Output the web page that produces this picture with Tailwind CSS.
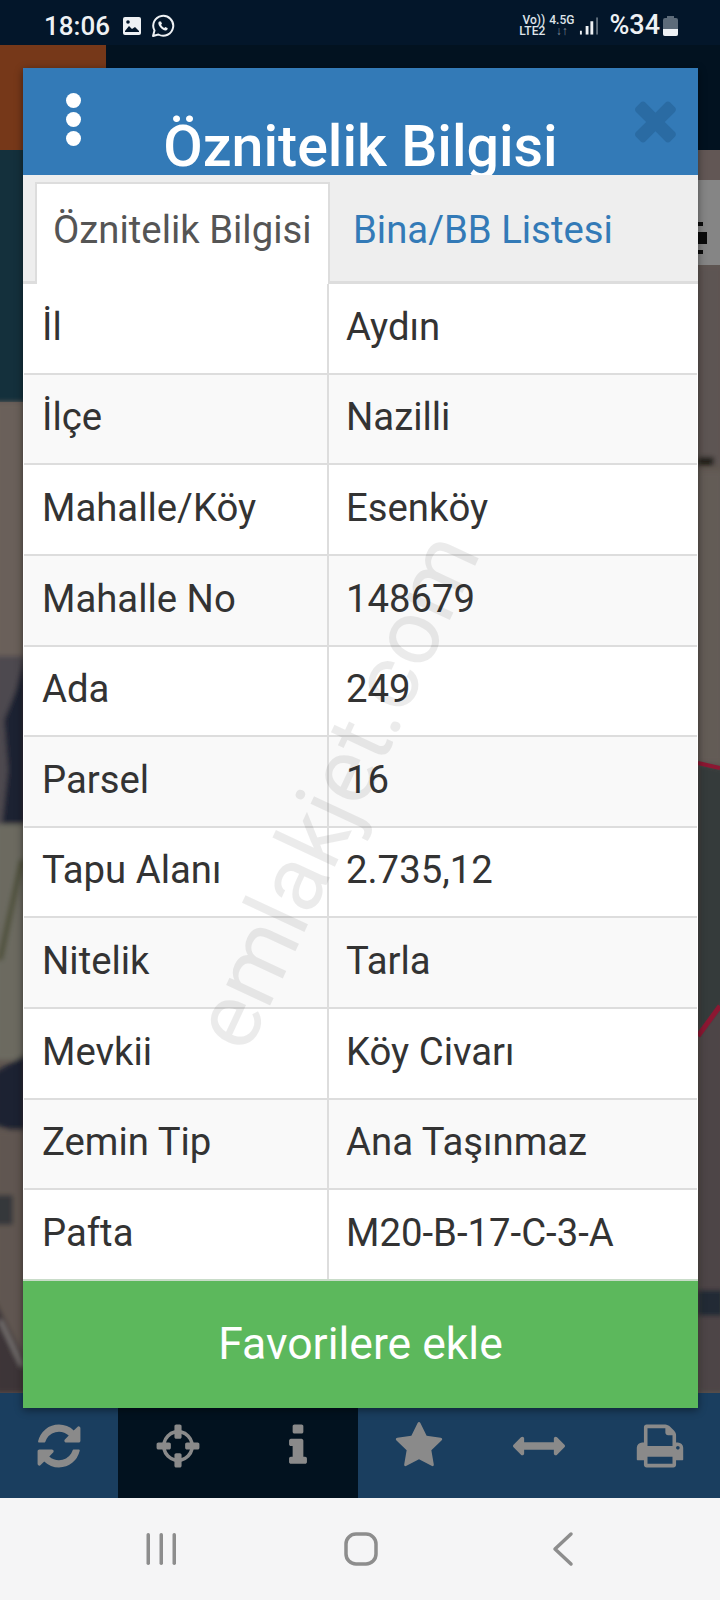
<!DOCTYPE html>
<html lang="tr">
<head>
    <meta charset="UTF-8">
    <meta name="viewport" content="width=device-width, initial-scale=1.0">
    <title>Öznitelik Bilgisi</title>
    <script src="https://cdn.jsdelivr.net/npm/@tailwindcss/browser@4"></script>
</head>
<body class="bg-[#f5f5f6]">
<div class="relative w-[720px] h-[1600px] overflow-hidden flex flex-col font-['Roboto',sans-serif]">

    <!-- status bar -->
    <div class="h-[45px] bg-[#03162a] flex items-center pl-[44px] pr-[42px] pt-[6px] text-white shrink-0">
        <span class="text-[26px] font-medium leading-none text-[#eef1f4] w-[66px]">18:06</span>
        <svg class="ml-[12px] mt-[1px]" width="20" height="20" viewBox="0 0 20 20"><rect x="1" y="1" width="18" height="18" rx="2" fill="#eef1f4"/><path d="M3 15l4-5 3 3 3-2 4 4v1H3z" fill="#03162a"/><circle cx="6" cy="6" r="1.8" fill="#03162a"/></svg>
        <svg class="ml-[9px] mt-[1px]" width="24" height="24" viewBox="0 0 24 24"><path d="M2 22l1.500-5.400A10 10 0 1 1 7.400 20.500z" fill="none" stroke="#eef1f4" stroke-width="2" stroke-linejoin="round"/><path d="M8 7.500c-1 1-1 3 1 5.500s4.500 4 6 3.500 2-2 1.500-2.500l-2.200-1.100-1 1.100c-1-.3-2.700-2-3.200-3.200l.9-1-1-2.300z" fill="#eef1f4"/></svg>
        <div class="ml-auto flex items-center">
            <div class="flex flex-col items-end text-[12px] font-medium leading-[11px] text-[#dfe4e9]"><span>Vo))</span><span>LTE2</span></div>
            <div class="ml-[4px] flex flex-col items-center text-[12px] font-medium leading-[11px] text-[#dfe4e9]"><span>4.5G</span><span class="text-[#7d8b99]">↓↑</span></div>
            <svg class="ml-[5px]" width="19" height="20" viewBox="0 0 20 20"><rect x="1" y="15" width="2" height="4" fill="#eef1f4"/><rect x="7" y="10" width="3" height="9" fill="#eef1f4"/><rect x="12" y="5" width="3" height="14" fill="#eef1f4"/><rect x="18" y="1" width="2" height="18" fill="#5f6d7b"/></svg>
            <span class="ml-[11px] text-[27px] font-medium leading-none text-[#eef1f4]">%34</span>
            <svg class="ml-[3px]" width="15" height="21" viewBox="0 0 15 21"><path d="M4 1h7v2h2q2 0 2 2v14q0 2-2 2H2q-2 0-2-2V5q0-2 2-2h2z" fill="#5d6b79"/><path d="M0 14h15v5q0 2-2 2H2q-2 0-2-2z" fill="#eef1f4"/></svg>
        </div>
    </div>

    <!-- map behind the dialog -->
    <div class="relative flex-1 bg-[#5f5650]">
        <svg class="absolute inset-0" width="720" height="1348" viewBox="0 45 720 1348" preserveAspectRatio="none">
            <defs><filter id="soft" x="-20%" y="-5%" width="140%" height="110%"><feGaussianBlur stdDeviation="2.500"/></filter></defs>
            <rect x="0" y="45" width="720" height="105" fill="#021220"/>
            <rect x="0" y="45" width="106" height="105" fill="#763819"/>
            <rect x="0" y="150" width="23" height="252" fill="#14303c"/>
            <g filter="url(#soft)">
                <rect x="-5" y="402" width="30" height="260" fill="#6a605a"/>
                <rect x="-5" y="656" width="30" height="170" fill="#4e4a50"/>
                <path d="M25 656V824H2L8 770 4 720 16 690z" fill="#1d2133"/>
                <rect x="-5" y="824" width="30" height="236" fill="#6c6a60"/>
                <path d="M0 960L22 860" stroke="#4c4d36" stroke-width="5"/>
                <path d="M-5 1072L25 1055V1135L-5 1125z" fill="#1b2233"/>
                <rect x="-5" y="1130" width="30" height="215" fill="#605751"/>
                <rect x="-5" y="1195" width="18" height="30" fill="#35383a"/>
                <path d="M-5 1300L25 1360V1393H-5z" fill="#3c3638"/>
                <path d="M0 1320L22 1366" stroke="#85817f" stroke-width="3"/>
                <rect x="698" y="265" width="25" height="200" fill="#5d5553"/>
                <rect x="698" y="457" width="16" height="8" fill="#1e1a18"/>
                <rect x="698" y="471" width="25" height="292" fill="#635b57"/>
                <path d="M698 763L725 769V1000L698 1036z" fill="#343b3b"/>
                <path d="M698 1036L725 1000V1393H698z" fill="#4d4546"/>
                <rect x="698" y="1290" width="25" height="26" fill="#232a35"/>
            </g>
            <rect x="698" y="150" width="22" height="30" fill="#625755"/>
            <rect x="698" y="180" width="22" height="85" fill="#858585"/>
            <rect x="698" y="232" width="9" height="12" fill="#0b0b0b"/>
            <rect x="698" y="222" width="5" height="4" fill="#0b0b0b"/>
            <rect x="698" y="250" width="5" height="4" fill="#0b0b0b"/>
            <path d="M698 763L720 768" stroke="#8c1732" stroke-width="4"/>
            <path d="M698 1036L720 1006" stroke="#8c1732" stroke-width="5"/>
        </svg>
    </div>

    <!-- bottom toolbar -->
    <div class="h-[105px] bg-[#1a3e5f] grid grid-cols-[118px_120px_120px_121px_120px_121px] shrink-0 text-[#8a8a8a]">
        <div class="flex items-center justify-center">
            <svg width="50" height="50" viewBox="0 0 1792 1792" fill="currentColor"><path d="M1639 1056q0 5-1 7-64 268-268 434.500t-478 166.500q-146 0-282.500-55t-243.500-157l-129 129q-19 19-45 19t-45-19-19-45v-448q0-26 19-45t45-19h448q26 0 45 19t19 45-19 45l-137 137q71 66 161 102t187 36q134 0 250-65t186-179q11-17 53-117 8-23 30-23h192q13 0 22.500 9.500t9.500 22.500zm25-800v448q0 26-19 45t-45 19h-448q-26 0-45-19t-19-45 19-45l138-138q-148-137-349-137-134 0-250 65t-186 179q-11 17-53 117-8 23-30 23h-199q-13 0-22.500-9.500t-9.500-22.500v-7q65-268 270-434.500t480-166.500q146 0 284 55.500t245 156.500l130-129q19-19 45-19t45 19 19 45z"/></svg>
        </div>
        <div class="flex items-center justify-center bg-[#02121f]">
            <svg width="50" height="50" viewBox="0 0 1792 1792" fill="currentColor"><path d="M1325 1024h-109q-26 0-45-19t-19-45v-128q0-26 19-45t45-19h109q-32-108-112.500-188.500t-188.500-112.500v109q0 26-19 45t-45 19h-128q-26 0-45-19t-19-45v-109q-108 32-188.500 112.500t-112.500 188.500h109q26 0 45 19t19 45v128q0 26-19 45t-45 19h-109q32 108 112.500 188.500t188.500 112.500v-109q0-26 19-45t45-19h128q26 0 45 19t19 45v109q108-32 188.500-112.500t112.500-188.500zm339-192v128q0 26-19 45t-45 19h-143q-37 161-154.500 278.500t-278.500 154.500v143q0 26-19 45t-45 19h-128q-26 0-45-19t-19-45v-143q-161-37-278.500-154.500t-154.500-278.500h-143q-26 0-45-19t-19-45v-128q0-26 19-45t45-19h143q37-161 154.500-278.500t278.500-154.500v-143q0-26 19-45t45-19h128q26 0 45 19t19 45v143q161 37 278.500 154.500t154.500 278.500h143q26 0 45 19t19 45z"/></svg>
        </div>
        <div class="flex items-center justify-center bg-[#02121f]">
            <svg width="50" height="50" viewBox="0 0 1792 1792" fill="currentColor"><path d="M1216 1344v128q0 26-19 45t-45 19h-512q-26 0-45-19t-19-45v-128q0-26 19-45t45-19h64v-384h-64q-26 0-45-19t-19-45v-128q0-26 19-45t45-19h384q26 0 45 19t19 45v576h64q26 0 45 19t19 45zm-128-1152v192q0 26-19 45t-45 19h-256q-26 0-45-19t-19-45v-192q0-26 19-45t45-19h256q26 0 45 19t19 45z"/></svg>
        </div>
        <div class="flex items-center justify-center">
            <svg width="50" height="50" viewBox="0 0 1792 1792" fill="currentColor"><path d="M1728 647q0 22-26 48l-363 354 86 500q1 7 1 20 0 21-10.500 35.500t-30.500 14.500q-19 0-40-12l-449-236-449 236q-22 12-40 12-21 0-31.500-14.500t-10.500-35.500q0-6 2-20l86-500-364-354q-25-27-25-48 0-37 56-46l502-73 225-455q19-41 49-41t49 41l225 455 502 73q56 9 56 46z"/></svg>
        </div>
        <div class="flex items-center justify-center">
            <svg width="52" height="52" viewBox="0 0 1792 1792" fill="currentColor"><path d="M1792 896q0 26-19 45l-256 256q-19 19-45 19t-45-19-19-45v-128h-1024v128q0 26-19 45t-45 19-45-19l-256-256q-19-19-19-45t19-45l256-256q19-19 45-19t45 19 19 45v128h1024v-128q0-26 19-45t45-19 45 19l256 256q19 19 19 45z"/></svg>
        </div>
        <div class="flex items-center justify-center">
            <svg width="50" height="50" viewBox="0 0 1792 1792" fill="currentColor"><path d="M448 1536h896v-256h-896v256zm0-640h896v-384h-160q-40 0-68-28t-28-68v-160h-640v640zm1152 64q0-26-19-45t-45-19-45 19-19 45 19 45 45 19 45-19 19-45zm128 0v416q0 13-9.500 22.500t-22.500 9.500h-224v160q0 40-28 68t-68 28h-960q-40 0-68-28t-28-68v-160h-224q-13 0-22.500-9.500t-9.500-22.500v-416q0-79 56.500-135.500t135.500-56.500h64v-544q0-40 28-68t68-28h672q40 0 88 20t76 48l152 152q28 28 48 76t20 88v256h64q79 0 135.500 56.500t56.500 135.500z"/></svg>
        </div>
    </div>

    <!-- android nav bar -->
    <div class="h-[102px] bg-[#f5f5f6] grid grid-cols-3 shrink-0 text-[#8d8d8d]">
        <div class="flex items-center justify-center">
            <svg class="ml-[82px]" width="36" height="36" viewBox="0 0 36 36" fill="currentColor"><rect x="3.500" y="2" width="3.500" height="32" rx="1.700"/><rect x="16.500" y="2" width="3.500" height="32" rx="1.700"/><rect x="29.500" y="2" width="3.500" height="32" rx="1.700"/></svg>
        </div>
        <div class="flex items-center justify-center">
            <svg class="ml-[2px]" width="36" height="36" viewBox="0 0 36 36" fill="none" stroke="currentColor" stroke-width="3.500"><rect x="3" y="3" width="30" height="30" rx="10"/></svg>
        </div>
        <div class="flex items-center justify-center">
            <svg class="ml-[-74px]" width="24" height="36" viewBox="0 0 24 36" fill="none" stroke="currentColor" stroke-width="3.500" stroke-linecap="round" stroke-linejoin="round"><path d="M20 3L4 18l16 15"/></svg>
        </div>
    </div>

    <!-- dialog -->
    <div class="absolute left-[23px] top-[68px] w-[675px] h-[1340px] flex flex-col bg-white shadow-[0_2px_8px_rgba(0,0,0,0.45)]">
        <div class="relative h-[107px] bg-[#337ab7] overflow-hidden shrink-0">
            <div class="absolute left-[43px] top-[25px] flex flex-col gap-[4px]">
                <span class="w-[15px] h-[15px] rounded-full bg-white"></span>
                <span class="w-[15px] h-[15px] rounded-full bg-white"></span>
                <span class="w-[15px] h-[15px] rounded-full bg-white"></span>
            </div>
            <div class="absolute left-0 right-0 top-[46px] text-center text-white text-[57.300px] font-medium leading-[66px] whitespace-nowrap">Öznitelik Bilgisi</div>
            <svg class="absolute left-[611px] top-[32px]" width="44" height="44" viewBox="272 320 1280 1280" fill="#2a6ba3"><path d="M1490 1322q0 40-28 68l-136 136q-28 28-68 28t-68-28l-294-294-294 294q-28 28-68 28t-68-28l-136-136q-28-28-28-68t28-68l294-294-294-294q-28-28-28-68t28-68l136-136q28-28 68-28t68 28l294 294 294-294q28-28 68-28t68 28l136 136q28 28 28 68t-28 68l-294 294 294 294q28 28 28 68z"/></svg>
        </div>

        <div class="h-[109px] bg-[#eeeeee] border-b-[3px] border-[#dddddd] flex pl-[12px] pt-[7px] shrink-0">
            <div class="w-[295px] h-[103px] bg-white border-2 border-b-0 border-[#dddddd] pl-[16px] pt-[24px] text-[38.300px] leading-[44px] text-[#555555] whitespace-nowrap">Öznitelik Bilgisi</div>
            <div class="pl-[23px] pt-[26px] text-[38.300px] leading-[44px] text-[#337ab7] whitespace-nowrap">Bina/BB Listesi</div>
        </div>

        <div class="flex-1 flex flex-col px-[1px] text-[38.300px] text-[#333333]">
            <div class="grid grid-cols-[305px_1fr] flex-1 border-b-2 border-[#dddddd] bg-white"><div class="flex items-center pl-[18px] pb-[4px] border-r-2 border-[#dddddd]">İl</div><div class="flex items-center pl-[17px] pb-[4px]">Aydın</div></div>
            <div class="grid grid-cols-[305px_1fr] flex-1 border-b-2 border-[#dddddd] bg-[#f9f9f9]"><div class="flex items-center pl-[18px] pb-[4px] border-r-2 border-[#dddddd]">İlçe</div><div class="flex items-center pl-[17px] pb-[4px]">Nazilli</div></div>
            <div class="grid grid-cols-[305px_1fr] flex-1 border-b-2 border-[#dddddd] bg-white"><div class="flex items-center pl-[18px] pb-[4px] border-r-2 border-[#dddddd]">Mahalle/Köy</div><div class="flex items-center pl-[17px] pb-[4px]">Esenköy</div></div>
            <div class="grid grid-cols-[305px_1fr] flex-1 border-b-2 border-[#dddddd] bg-[#f9f9f9]"><div class="flex items-center pl-[18px] pb-[4px] border-r-2 border-[#dddddd]">Mahalle No</div><div class="flex items-center pl-[17px] pb-[4px]">148679</div></div>
            <div class="grid grid-cols-[305px_1fr] flex-1 border-b-2 border-[#dddddd] bg-white"><div class="flex items-center pl-[18px] pb-[4px] border-r-2 border-[#dddddd]">Ada</div><div class="flex items-center pl-[17px] pb-[4px]">249</div></div>
            <div class="grid grid-cols-[305px_1fr] flex-1 border-b-2 border-[#dddddd] bg-[#f9f9f9]"><div class="flex items-center pl-[18px] pb-[4px] border-r-2 border-[#dddddd]">Parsel</div><div class="flex items-center pl-[17px] pb-[4px]">16</div></div>
            <div class="grid grid-cols-[305px_1fr] flex-1 border-b-2 border-[#dddddd] bg-white"><div class="flex items-center pl-[18px] pb-[4px] border-r-2 border-[#dddddd]">Tapu Alanı</div><div class="flex items-center pl-[17px] pb-[4px]">2.735,12</div></div>
            <div class="grid grid-cols-[305px_1fr] flex-1 border-b-2 border-[#dddddd] bg-[#f9f9f9]"><div class="flex items-center pl-[18px] pb-[4px] border-r-2 border-[#dddddd]">Nitelik</div><div class="flex items-center pl-[17px] pb-[4px]">Tarla</div></div>
            <div class="grid grid-cols-[305px_1fr] flex-1 border-b-2 border-[#dddddd] bg-white"><div class="flex items-center pl-[18px] pb-[4px] border-r-2 border-[#dddddd]">Mevkii</div><div class="flex items-center pl-[17px] pb-[4px]">Köy Civarı</div></div>
            <div class="grid grid-cols-[305px_1fr] flex-1 border-b-2 border-[#dddddd] bg-[#f9f9f9]"><div class="flex items-center pl-[18px] pb-[4px] border-r-2 border-[#dddddd]">Zemin Tip</div><div class="flex items-center pl-[17px] pb-[4px]">Ana Taşınmaz</div></div>
            <div class="grid grid-cols-[305px_1fr] flex-1 bg-white"><div class="flex items-center pl-[18px] pb-[4px] border-r-2 border-[#dddddd]">Pafta</div><div class="flex items-center pl-[17px] pb-[4px]">M20-B-17-C-3-A</div></div>
        </div>

        <div class="h-[129px] bg-[#5cb85c] flex items-center justify-center pb-[1px] text-white text-[44.500px] shrink-0 border-t-2 border-[#c9dcc9]">Favorilere ekle</div>
    </div>

    <!-- watermark -->
    <div class="absolute left-[36px] top-[745px] w-[600px] text-center text-[92px] leading-none text-black/[0.08] -rotate-[65deg] whitespace-nowrap pointer-events-none">emlakjet.com</div>
</div>
</body>
</html>
